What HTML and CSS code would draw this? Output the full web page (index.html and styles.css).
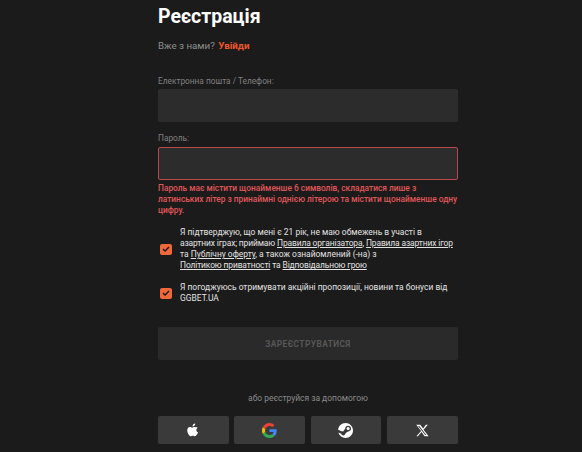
FILE: index.html
```html
<!DOCTYPE html>
<html lang="uk">
<head>
    <meta charset="UTF-8">
    <meta name="viewport" content="width=device-width, initial-scale=1.0">
    <title>Реєстрація</title>
    <link rel="stylesheet" href="styles.css">
</head>
<body>
    <div class="form_con">
        <h1 class="title">Реєстрація</h1>
        <p class="login_line">Вже з нами? <a href="#" class="login_link">Увійди</a></p>

        <label class="field_label label_first">Електронна пошта / Телефон:</label>
        <div class="field"></div>

        <label class="field_label label_second">Пароль:</label>
        <div class="field field_error"></div>
        <p class="error_text">Пароль має містити щонайменше 6 символів, складатися лише з латинських літер з принаймні однією літерою та містити щонайменше одну цифру.</p>

        <div class="check_row check_first">
            <span class="check_box">
                <svg width="8" height="6" viewBox="0 0 10 8"><path d="M1 4.200 3.800 6.600 9 1.400" fill="none" stroke="#1b1b1b" stroke-width="2"/></svg>
            </span>
            <p class="check_text check_nowrap">Я підтверджую, що мені є 21 рік, не маю обмежень в участі в<br>
                <span class="check_tight">азартних іграх; приймаю <a href="#">Правила організатора</a>, <a href="#">Правила азартних ігор</a></span><br>
                та <a href="#">Публічну оферту</a>, а також ознайомлений (-на) з<br>
                <span class="check_tight"><a href="#">Політикою приватності</a> та <a href="#">Відповідальною грою</a></span></p>
        </div>
        <div class="check_row check_second">
            <span class="check_box">
                <svg width="8" height="6" viewBox="0 0 10 8"><path d="M1 4.200 3.800 6.600 9 1.400" fill="none" stroke="#1b1b1b" stroke-width="2"/></svg>
            </span>
            <p class="check_text">Я погоджуюсь отримувати акційні пропозиції, новини та бонуси від GGBET.UA</p>
        </div>

        <button class="submit_btn" type="button">ЗАРЕЄСТРУВАТИСЯ</button>

        <p class="social_title">або реєструйся за допомогою</p>
        <div class="social_list">
            <a href="#" class="social_btn" aria-label="Apple">
                <svg width="12" height="14" viewBox="0 0 14 16"><path fill="#fff" d="M9.600 0.300c0.100 1-0.300 1.900-0.800 2.500-0.600 0.700-1.400 1.200-2.300 1.100-0.100-0.900 0.300-1.900 0.800-2.500C7.900 0.800 8.800 0.300 9.600 0.300zM12.400 5.400c-0.900 0.600-1.500 1.400-1.500 2.600 0 1.400 0.800 2.300 2 2.800-0.300 0.900-0.700 1.700-1.300 2.500-0.700 1-1.400 1.900-2.400 1.900-1 0-1.300-0.600-2.500-0.600-1.200 0-1.500 0.600-2.500 0.600-1 0-1.700-0.900-2.400-1.900C0.900 11.800 0.300 10.100 0.300 8.500c0-2.500 1.600-3.900 3.200-3.900 1 0 1.800 0.700 2.500 0.700 0.600 0 1.600-0.700 2.700-0.700 0.800 0 2.600 0.200 3.700 0.800z"/></svg>
            </a>
            <a href="#" class="social_btn" aria-label="Google">
                <svg width="15" height="15" viewBox="0 0 48 48">
                    <path fill="#ea4335" d="M24 9.500c3.500 0 6.700 1.200 9.200 3.600l6.900-6.900C35.900 2.400 30.500 0 24 0 14.600 0 6.500 5.400 2.600 13.200l8 6.200C12.400 13.700 17.700 9.500 24 9.500z"/>
                    <path fill="#4285f4" d="M47 24.500c0-1.600-0.100-3.100-0.400-4.500H24v9h12.900c-0.600 3-2.200 5.500-4.700 7.200l7.700 6c4.500-4.200 7.100-10.300 7.100-17.700z"/>
                    <path fill="#fbbc05" d="M10.500 28.600c-0.500-1.400-0.800-3-0.800-4.600s0.300-3.200 0.800-4.600l-8-6.200C0.900 16.500 0 20.100 0 24s0.900 7.500 2.600 10.800l7.900-6.200z"/>
                    <path fill="#34a853" d="M24 48c6.500 0 11.900-2.100 15.900-5.800l-7.700-6c-2.200 1.400-4.900 2.300-8.200 2.300-6.300 0-11.600-4.200-13.500-9.900l-8 6.200C6.500 42.600 14.600 48 24 48z"/>
                </svg>
            </a>
            <a href="#" class="social_btn" aria-label="Steam">
                <svg width="15" height="15" viewBox="0 0 16 16">
                    <path fill="#fff" d="M8 0C3.800 0 0.400 3.200 0.100 7.300l4.300 1.800c0.400-0.300 0.800-0.400 1.300-0.400h0.100L7.700 5.900C7.700 4.200 9.100 2.800 10.800 2.800c1.700 0 3.100 1.400 3.100 3.100s-1.400 3.100-3.100 3.100h-0.100L8 10.900c0 1.300-1 2.300-2.300 2.300-1.100 0-2-0.800-2.200-1.800L0.500 10.200C1.500 13.600 4.500 16 8 16c4.400 0 8-3.600 8-8S12.400 0 8 0z"/>
                    <circle cx="10.800" cy="5.900" r="1.600" fill="#fff"/>
                </svg>
            </a>
            <a href="#" class="social_btn" aria-label="X">
                <svg width="13" height="13" viewBox="0 0 24 24"><path fill="#fff" d="M18.200 1.500h3.700l-8 9.200L23.300 22.500h-7.400l-5.800-7.600-6.600 7.600H0.800l8.600-9.800L0.300 1.500h7.600l5.200 6.900zM16.900 20.400h2L6 3.600H3.800z"/></svg>
            </a>
        </div>
    </div>
</body>
</html>
```

FILE: styles.css
```css
body,h1,p{
    margin: 0;
    padding: 0;
}
body{
    background-color: #1b1b1b;
    font-family: 'Roboto', 'Liberation Sans', sans-serif;
    height: 452px;
    overflow: hidden;
}
a{
    text-decoration: none;
}
.form_con{
    width: 300px;
    margin-left: 158px;
}
.title{
    font-size: 19.500px;
    line-height: 24px;
    font-weight: 700;
    color: #fff;
    padding-top: 5px;
}
.login_line{
    font-size: 9.750px;
    line-height: 14px;
    color: #8f8f8f;
    margin-top: 10px;
}
.login_link{
    color: #f0562c;
    font-weight: 700;
    margin-left: 1px;
}
.field_label{
    display: block;
    font-size: 8.300px;
    line-height: 12px;
    color: #808080;
}
.label_first{
    margin-top: 22px;
}
.label_second{
    margin-top: 10px;
}
.field{
    height: 33px;
    margin-top: 3px;
    background-color: #2c2c2c;
    border-radius: 2px;
}
.label_first + .field{
    margin-top: 2px;
}
.field_error{
    box-sizing: border-box;
    border: 1px solid #b84a4d;
}
.error_text{
    font-size: 8.360px;
    line-height: 11px;
    font-weight: 500;
    color: #e0575a;
    margin-top: 3px;
}
.check_row{
    display: flex;
    align-items: center;
    gap: 8px;
    padding-left: 2px;
}
.check_first{
    margin-top: 11px;
}
.check_second{
    margin-top: 11px;
}
.check_box{
    flex: none;
    width: 12px;
    height: 11px;
    background-color: #f0673a;
    border-radius: 2px;
    display: flex;
    align-items: center;
    justify-content: center;
}
.check_text{
    font-size: 8.450px;
    line-height: 11px;
    color: #e2e2e2;
}
.check_nowrap{
    white-space: nowrap;
}
.check_tight{
    letter-spacing: -0.130px;
}
.check_text a{
    color: #e2e2e2;
    text-decoration: underline;
}
.submit_btn{
    display: block;
    width: 100%;
    height: 33px;
    margin-top: 23px;
    border: 0;
    border-radius: 2px;
    background-color: #2a2a2a;
    color: #575757;
    font-family: inherit;
    font-size: 8.330px;
    font-weight: 700;
    letter-spacing: 0.420px;
}
.social_title{
    font-size: 8.450px;
    line-height: 12px;
    color: #8a8a8a;
    text-align: center;
    margin-top: 32px;
}
.social_list{
    display: flex;
    gap: 5.500px;
    margin-top: 12px;
    margin-right: 0.500px;
}
.social_btn{
    flex: 1;
    height: 28px;
    background-color: #3a3a3a;
    border-radius: 2px;
    display: flex;
    align-items: center;
    justify-content: center;
}
```
